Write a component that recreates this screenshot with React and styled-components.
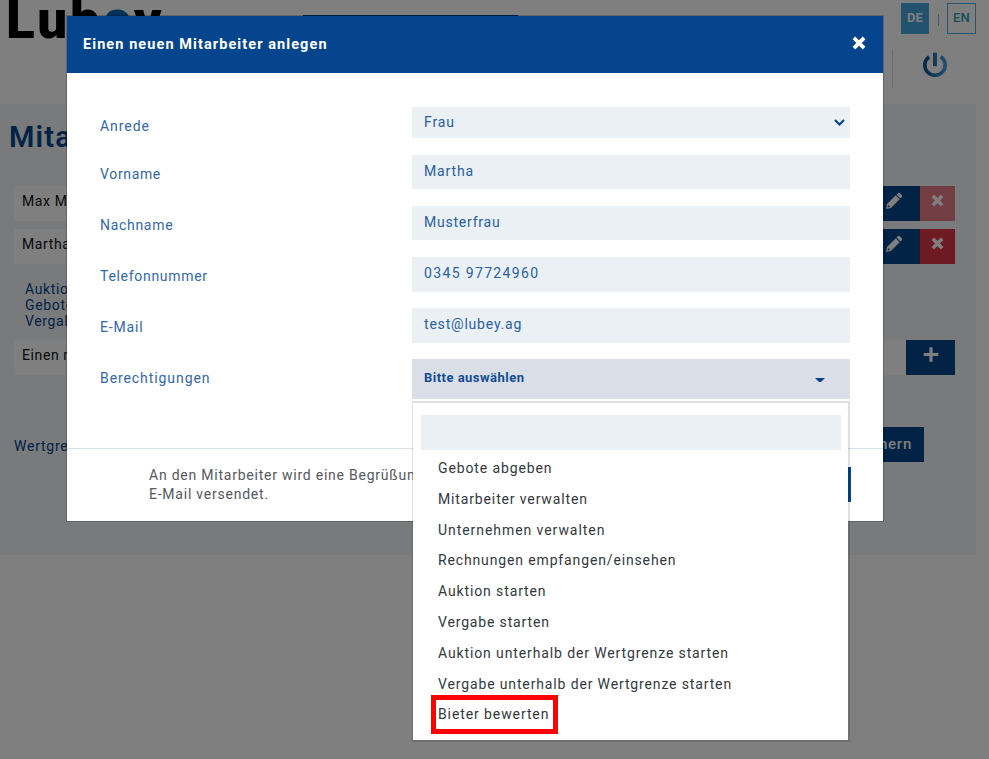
import React from "react";
import styled, { createGlobalStyle, css } from "styled-components";

const Global = createGlobalStyle`
  * { box-sizing: border-box; }
  html, body { margin: 0; background: #fff; overflow: hidden; }
  body { font-family: Roboto, "Open Sans", sans-serif; font-size: 14px; color: #212529; }
`;
const navy = "#05458d";

const Screen = styled.div`position: relative; width: 989px; height: 759px; overflow: hidden;`;
const Page = styled.div`height: 759px; display: flex; flex-direction: column; background: #fff;`;
const Header = styled.header`height: 104px; display: flex; align-items: flex-start; flex: none;`;
const Logo = styled.div`
  width: 303px; padding-left: 6px; font-size: 53px; line-height: 60px; height: 60px;
  font-weight: 900; color: #000; margin-top: -10px; letter-spacing: 2.8px;
  span { color: #0563b5; }
`;
const NavTab = styled.div`
  width: 215px; height: 40px; margin-top: 15px; background: ${navy};
`;
const Tools = styled.div`
  margin-left: auto; width: 97px; height: 90px; margin-top: 3px; display: flex; flex-direction: column;
`;
const Languages = styled.div`display: flex; gap: 7px; padding-left: 9px; align-items: center;`;
const Language = styled.div`
  width: ${p => (p.$active ? 28 : 29)}px; height: 31px; border: 1px solid #46b1e6;
  background: ${p => (p.$active ? "#46a5dc" : "transparent")};
  color: ${p => (p.$active ? "#fff" : "#2a9fb4")}; font-weight: ${p => (p.$active ? 700 : 500)};
  font-size: 13px; line-height: 27px; text-align: center; letter-spacing: .2px;
`;
const Bar = styled.div`width: 1px; height: 12px; background: #a8a5c0; margin: 2px 1px 0 2px;`;
const Logout = styled.div`
  height: 38px; margin-top: 16px; border-left: 1px solid #d7d7dc; padding: 1px 0 0 29px;
  svg { display: block; }
`;
const Panel = styled.main`
  width: 976px; height: 451px; background: #f0f4f8; padding: 14px 21px 0 14px;
`;
const Title = styled.h1`
  margin: 0 0 30px -5px; height: 38px; line-height: 38px; color: ${navy}; font-size: 29px; font-weight: 600; letter-spacing: 1.2px;
`;
const Row = styled.div`
  display: flex; height: 35px; background: #fff; margin-bottom: 8px; padding-left: 8px;
  line-height: 30px; letter-spacing: 0.6px; color: #111;
  > span { flex: 1; }
`;
const RowButton = styled.div`
  width: ${p => p.$width}px; background: ${p => p.$color}; color: #fff;
  display: flex; justify-content: center; padding-top: ${p => p.$top || 6}px;
  svg { display: block; }
`;
const Rights = styled.div`
  height: 68px; padding: 9px 0 0 11px; line-height: 16px; color: ${navy}; letter-spacing: 0.65px;
`;
const Limit = styled.div`
  display: flex; margin-top: 52px; height: 35px; line-height: 38px; color: ${navy}; justify-content: space-between; letter-spacing: 0.75px;
`;
const Save = styled.div`
  width: 110px; margin-right: 31px; background: ${navy}; color: #fff; text-align: right; padding-right: 12px;
  line-height: 34px; font-weight: 500; font-size: 15px;
`;
const Backdrop = styled.div`
  position: absolute; inset: 0; background: rgba(0,0,0,.5);
`;
const Modal = styled.section`
  position: absolute; left: 67px; top: 16px; width: 816px; height: 505px; background: #fff;
  display: flex; flex-direction: column; box-shadow: 0 0 0 1px rgba(0,0,0,.2);
`;
const ModalHead = styled.div`
  height: 57px; background: ${navy}; color: #fff; display: flex; justify-content: space-between;
  padding: 0 17px 0 16px; line-height: 58px; font-weight: 700; font-size: 14.5px; letter-spacing: 1.08px;
  svg { margin-top: 20px; }
`;
const Form = styled.div`height: 375px; padding: 34px 33px 0;`;
const Field = styled.div`display: flex; margin-bottom: ${p => p.$gap}px;`;
const Label = styled.label`
  width: 312px; padding-top: 10px; line-height: 18px; color: #3268a8;
  letter-spacing: ${p => p.$track}px;
`;
const inputFace = css`background: #eaf0f3; color: #2a5f9f;`;
const Input = styled.div`
  ${inputFace}
  width: 438px; height: ${p => p.$height}px; padding: 0 4px 0 12px;
  display: flex; justify-content: space-between;
  line-height: ${p => p.$line}px; letter-spacing: ${p => p.$track}px;
  svg { margin-top: 9px; }
`;
const Picker = styled(Input)`
  background: #dadfe7; color: #124c94; font-weight: 700; font-size: 13px; padding-right: 25px;
  position: relative;
  svg { margin-top: 19px; }
`;
const Menu = styled.div`
  position: absolute; z-index: 2; left: 0; top: 42px; width: 438px; height: 341px;
  background: #fff; border: solid rgba(0,0,0,.12); border-width: 2px 2px 2px 1px;
  background-clip: padding-box; padding: 12px 7px 0 8px;
  font-size: 14px; font-weight: 400; color: #34383d;
`;
const Search = styled.div`${inputFace} height: 35px; width: 420px; margin-bottom: 3px;`;
const Option = styled.div`
  height: 30.8px; line-height: 31px; padding-left: 17px; letter-spacing: ${p => p.$track}px; white-space: nowrap;
`;
const Highlight = styled.div`
  width: 127px; height: 39px; margin: -4px 0 0 10px; border: 5px solid #fe0000;
  padding-left: 2px; line-height: 28px; letter-spacing: ${p => p.$track}px; white-space: nowrap;
`;
const Footer = styled.div`
  flex: 1; border-top: 1px solid #d8e0e7; padding: 17px 32px 0 82px; display: flex; justify-content: space-between;
  color: #55585c; line-height: 19px; letter-spacing: .77px;
`;
const Submit = styled.div`width: 120px; height: 35px; margin-top: 1px; background: ${navy};`;

const Cross = ({ size }) => (
  <svg width={size} height={size} viewBox="0 0 14 14">
    <path d="M3.3 3.3 10.7 10.7M10.7 3.3 3.3 10.7" stroke="currentColor" strokeWidth="3.8" strokeLinecap="square" />
  </svg>
);
const Pencil = () => (
  <svg width="18" height="18" viewBox="0 0 18 18" fill="currentColor">
    <path d="M12.7 1.4a1.7 1.7 0 0 1 2.4 0l1.5 1.5a1.7 1.7 0 0 1 0 2.4l-1.2 1.2-3.9-3.9z" />
    <path fillRule="evenodd" d="M10.8 3.3l3.9 3.9-8.8 8.8-4.8 1.1.9-5zM3.1 13l-.5 2.5 2.6-.6z" />
  </svg>
);
const Plus = () => (
  <svg width="16" height="16" viewBox="0 0 16 16">
    <path d="M8 2.8V14.2M2.3 8.5H13.7" stroke="currentColor" strokeWidth="3.2" strokeLinecap="square" />
  </svg>
);
const Power = () => (
  <svg width="26" height="28" viewBox="0 0 26 28" fill="none">
    <defs>
      <linearGradient id="power" gradientUnits="userSpaceOnUse" x1="0" y1="0" x2="26" y2="0">
        <stop stopColor="#05458d" /><stop offset="1" stopColor="#4aa6e0" />
      </linearGradient>
    </defs>
    <path d="M7.2 5.7A10.2 10.2 0 1 0 18.8 5.7" stroke="url(#power)" strokeWidth="3.6" />
    <path d="M11 1.7h4v13.5h-4z" fill="url(#power)" />
  </svg>
);

const fields = [
  { label: "Vorname", value: "Martha", height: 34, gap: 17, line: 32, track: 0.65, valueTrack: 0.85 },
  { label: "Nachname", value: "Musterfrau", height: 34, gap: 17, line: 32, track: 0.7, valueTrack: 0.78 },
  { label: "Telefonnummer", value: "0345 97724960", height: 35, gap: 16, line: 32, track: 0.7, valueTrack: 1.35 },
  { label: "E-Mail", value: "test@lubey.ag", height: 35, gap: 16, line: 32, track: 0.85, valueTrack: 0.8 },
];
const options = [
  ["Gebote abgeben", 0.88], ["Mitarbeiter verwalten", 0.86], ["Unternehmen verwalten", 0.94],
  ["Rechnungen empfangen/einsehen", 0.86], ["Auktion starten", 0.88], ["Vergabe starten", 0.84],
  ["Auktion unterhalb der Wertgrenze starten", 0.88], ["Vergabe unterhalb der Wertgrenze starten", 0.86],
];

export default function App() {
  return (
    <Screen>
      <Global />
      <Page>
        <Header>
          <Logo>Lub<span>e</span>y</Logo>
          <NavTab />
          <Tools>
            <Languages><Language $active>DE</Language><Bar /><Language>EN</Language></Languages>
            <Logout><Power /></Logout>
          </Tools>
        </Header>
        <Panel>
          <Title>Mitarbeiter</Title>
          <Row><span>Max Mustermann</span><RowButton $width={52} $color={navy}><Pencil /></RowButton><RowButton $width={35} $color="#e77c87" $top={8}><Cross size={13} /></RowButton></Row>
          <Row><span>Martha Musterfrau</span><RowButton $width={52} $color={navy}><Pencil /></RowButton><RowButton $width={35} $color="#dc3545" $top={8}><Cross size={13} /></RowButton></Row>
          <Rights>Auktion starten<br />Gebote abgeben<br />Vergabe starten</Rights>
          <Row><span>Einen neuen Mitarbeiter anlegen</span><RowButton $width={49} $color={navy}><Plus /></RowButton></Row>
          <Limit><span>Wertgrenze</span><Save>Speichern</Save></Limit>
        </Panel>
      </Page>
      <Backdrop />
      <Modal>
        <ModalHead><span>Einen neuen Mitarbeiter anlegen</span><Cross size={14} /></ModalHead>
        <Form>
          <Field $gap={17}>
            <Label $track={0.95}>Anrede</Label>
            <Input $height={31} $line={30} $track={0.85}>Frau
              <svg width="13" height="12" viewBox="0 0 13 12"><path d="M2 4l4.5 4.5L11 4" fill="none" stroke={navy} strokeWidth="2.2" /></svg>
            </Input>
          </Field>
          {fields.map(f => (
            <Field key={f.label} $gap={f.gap}>
              <Label $track={f.track}>{f.label}</Label>
              <Input $height={f.height} $line={f.line} $track={f.valueTrack}>{f.value}</Input>
            </Field>
          ))}
          <Field $gap={0}>
            <Label $track={0.92}>Berechtigungen</Label>
            <Picker $height={40} $line={37} $track={0.48}>Bitte auswählen
              <svg width="10" height="5" viewBox="0 0 10 5"><path d="M0 0h10L6 4H4z" fill={navy} /></svg>
              <Menu>
                <Search />
                {options.map(([text, track]) => <Option key={text} $track={track}>{text}</Option>)}
                <Highlight $track={0.9}>Bieter bewerten</Highlight>
              </Menu>
            </Picker>
          </Field>
        </Form>
        <Footer><span>An den Mitarbeiter wird eine Begrüßungs-<br />E-Mail versendet.</span><Submit /></Footer>
      </Modal>
    </Screen>
  );
}
